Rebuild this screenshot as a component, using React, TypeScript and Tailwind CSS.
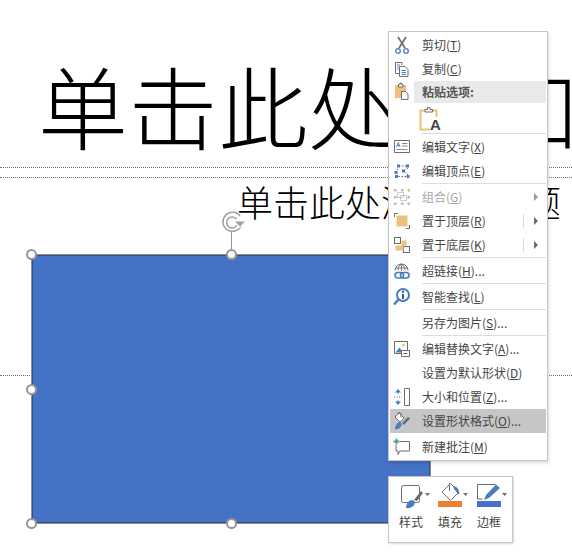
import type { ReactNode } from 'react';

const font = "font-['Microsoft_YaHei','Noto_Sans_CJK_SC','Liberation_Sans',sans-serif]";

const Blue = '#4a7ebb';
const Gold = '#ecc17e';
const Grey = '#6d6d6d';

function Ico({ children }: { children: ReactNode }) {
  return (
    <svg width="20" height="20" viewBox="0 0 20 20" fill="none">
      {children}
    </svg>
  );
}

const icons: Record<string, ReactNode> = {
  cut: (
    <Ico>
      <path d="M6 2l7 11M14 2L7 13" stroke={Grey} strokeWidth="1.700" />
      <circle cx="6" cy="16" r="2.300" stroke={Blue} strokeWidth="1.300" />
      <circle cx="14" cy="16" r="2.300" stroke={Blue} strokeWidth="1.300" />
    </Ico>
  ),
  copy: (
    <Ico>
      <path d="M10 6V3.500H3.500v11H7" stroke={Grey} />
      <path d="M7.500 7.500h5.500l3 3v7H7.500z" fill="#fff" stroke={Grey} />
      <path d="M9.500 11.500h4.500M9.500 13.500h4.500M9.500 15.500h4.500M5 6h3M5 8h1.500M5 10h1.500" stroke={Blue} />
    </Ico>
  ),
  paste: (
    <Ico>
      <path d="M3 4h11v13H3z" fill={Gold} />
      <path d="M6.500 6V3.500H8V2h1.500v1.500H11V6z" fill="#fff" stroke={Grey} />
      <path d="M9.500 10.500h4l2.500 2.500v5.500H9.500z" fill="#fff" stroke={Grey} />
    </Ico>
  ),
  text: (
    <Ico>
      <path d="M2.500 3.500h15v12h-15z" fill="#fff" stroke={Grey} />
      <path d="M4.500 10l1.800-4.500L8 10M5.200 8.500h2.200" stroke={Blue} />
      <path d="M10 6.500h5.500M10 9h5.500M4.500 12.500h11" stroke={Grey} strokeWidth="0.800" />
    </Ico>
  ),
  points: (
    <Ico>
      <path d="M7 5h7M16 7l-4 3 4 4M14 15.500H5M4 12l2-5" stroke={Grey} strokeDasharray="1.500 1.500" />
      {[[5, 3.500], [14, 3.500], [10, 8.500], [14.500, 14], [2.500, 10], [3, 14]].map(([x, y]) => (
        <rect key={`${x}-${y}`} x={x} y={y} width="3" height="3" fill={Blue} />
      ))}
    </Ico>
  ),
  group: (
    <Ico>
      <path d="M5.500 5.500h6v5h-6zM8.500 8.500h6v5h-6z" stroke="#c9c9c9" />
      {[[2, 2], [9, 2], [15.500, 2], [2, 9], [15.500, 9], [2, 15.500], [9, 15.500], [15.500, 15.500]].map(([x, y]) => (
        <rect key={`${x}-${y}`} x={x} y={y} width="2.500" height="2.500" fill="#bdbdbd" />
      ))}
    </Ico>
  ),
  front: (
    <Ico>
      <path d="M2.500 6V2.500H6M17.500 14v3.500H14" stroke={Grey} />
      <rect x="4.500" y="4.500" width="11" height="11" fill={Gold} />
    </Ico>
  ),
  back: (
    <Ico>
      <rect x="2.500" y="2.500" width="6" height="6" fill="#fff" stroke={Grey} />
      <rect x="11.500" y="11.500" width="6" height="6" fill="#fff" stroke={Grey} />
      <path d="M3.500 10.500h6v-5h5v5h-3v5h-8z" fill={Gold} />
    </Ico>
  ),
  link: (
    <Ico>
      <path d="M3 9.500a6.500 6.500 0 0 1 13 0" stroke={Grey} />
      <path d="M9.500 3v7M3.500 7h12M6 9.500c0-3 1.500-5.500 3.500-6.500 2 1 3.500 3.500 3.500 6.500" stroke={Grey} strokeWidth="0.900" />
      <rect x="3" y="11.500" width="8.500" height="5.500" rx="2.700" stroke={Blue} strokeWidth="1.700" />
      <rect x="8.500" y="11.500" width="8.500" height="5.500" rx="2.700" stroke={Blue} strokeWidth="1.700" />
    </Ico>
  ),
  search: (
    <Ico>
      <circle cx="11" cy="8" r="6" fill="#fff" stroke={Blue} strokeWidth="2" />
      <path d="M6.500 12.500L2 17.500" stroke={Blue} strokeWidth="2.600" />
      <path d="M11 7v5" stroke="#2f5f95" strokeWidth="2" />
      <circle cx="11" cy="4.800" r="1.200" fill="#2f5f95" />
    </Ico>
  ),
  alt: (
    <Ico>
      <path d="M2.500 2.500h13v12h-13z" fill="#fff" stroke={Grey} />
      <circle cx="11.500" cy="6" r="1.500" fill={Gold} />
      <path d="M3.500 13.500l4-5 3.500 5z" fill={Blue} />
      <path d="M9.500 11.500h8v6h-8z" fill="#fff" stroke={Grey} />
      <path d="M11.500 14.500h4" stroke={Grey} />
    </Ico>
  ),
  size: (
    <Ico>
      <path d="M12.500 1.500h5v17h-5z" stroke={Grey} />
      <path d="M6 2L3 5.500h6zM6 18l-3-3.500h6z" fill={Blue} />
      <path d="M6 5v2M6 13v2" stroke={Blue} />
      <path d="M2 10h8" stroke={Grey} strokeDasharray="1 1.500" />
    </Ico>
  ),
  format: (
    <Ico>
      <path d="M3 6l4-4 5 5-4 4z" fill="#fff" stroke={Grey} />
      <path d="M6 2.500c1-2 3-1 3 1v3" stroke={Grey} />
      <path d="M3 18c0-4 3-7 5-7l2 2c-1 3-3 6-7 5z" fill={Blue} />
      <path d="M10 12l6-6 2 1.500-6 6.500z" fill="#5d6f86" />
    </Ico>
  ),
  comment: (
    <Ico>
      <path d="M8 4.500h9.500v9.500H8l-2 3.500v-3.500H4v-6" stroke={Grey} />
      <path d="M4.500 1.500v6M1.500 4.500h6" stroke="#4f9d84" strokeWidth="1.800" />
    </Ico>
  ),
};

type Row = {
  label: string;
  hot?: string;
  tail?: string;
  icon?: string;
  sep?: boolean;
  disabled?: boolean;
  sub?: boolean;
  split?: boolean;
  active?: boolean;
};

const top: Row[] = [
  { label: '剪切(', hot: 'T', tail: ')', icon: 'cut' },
  { label: '复制(', hot: 'C', tail: ')', icon: 'copy' },
];

const rest: Row[] = [
  { label: '编辑文字(', hot: 'X', tail: ')', icon: 'text' },
  { label: '编辑顶点(', hot: 'E', tail: ')', icon: 'points', sep: true },
  { label: '组合(', hot: 'G', tail: ')', icon: 'group', disabled: true, sub: true },
  { label: '置于顶层(', hot: 'R', tail: ')', icon: 'front', sub: true, split: true },
  { label: '置于底层(', hot: 'K', tail: ')', icon: 'back', sub: true, split: true, sep: true },
  { label: '超链接(', hot: 'H', tail: ')...', icon: 'link', sep: true },
  { label: '智能查找(', hot: 'L', tail: ')', icon: 'search', sep: true },
  { label: '另存为图片(', hot: 'S', tail: ')...', sep: true },
  { label: '编辑替换文字(', hot: 'A', tail: ')...', icon: 'alt' },
  { label: '设置为默认形状(', hot: 'D', tail: ')' },
  { label: '大小和位置(', hot: 'Z', tail: ')...', icon: 'size' },
  { label: '设置形状格式(', hot: 'O', tail: ')...', icon: 'format', active: true },
];

function MenuRow({ row }: { row: Row }) {
  return (
    <>
      <div className={`flex h-6 items-center ${row.active ? 'bg-[#c6c6c6]' : ''}`}>
        <div className="flex w-8 shrink-0 pl-[2px]">{row.icon && icons[row.icon]}</div>
        <span className={`text-xs ${row.disabled ? 'text-[#a6a6a6]' : 'text-[#444444]'}`}>
          {row.label}
          <span className="underline">{row.hot}</span>
          {row.tail}
        </span>
        {row.sub && (
          <div className="ml-auto flex items-center">
            {row.split && <div className="h-[14px] w-px bg-[#d8d8d8]" />}
            <div className={`ml-[10px] mr-[8px] h-0 w-0 border-y-[4px] border-l-[4px] border-y-transparent ${row.disabled ? 'border-l-[#9a9a9a]' : 'border-l-[#6a6a6a]'}`} />
          </div>
        )}
      </div>
      {row.sep && <div className="mb-[1px] ml-8 h-px bg-[#dcdcdc]" />}
    </>
  );
}

function ContextMenu() {
  return (
    <div className={`absolute left-[388px] top-[31px] w-[160px] border border-[#c6c6c6] bg-white p-[1px] shadow-[1px_2px_3px_rgba(0,0,0,0.15)] ${font}`}>
      {top.map((r) => (
        <MenuRow key={r.label} row={r} />
      ))}
      <div className="flex h-[22px]">
        <div className="flex w-6 shrink-0 pl-[2px]">{icons.paste}</div>
        <div className="flex flex-1 items-center bg-[#e9e9e9] pl-[8px] text-xs font-bold text-[#555555]">粘贴选项:</div>
      </div>
      <div className="h-[30px] pl-[29px] pt-[4px]">
        <svg width="24" height="24" viewBox="0 0 24 24" fill="none">
          <path d="M1.500 3.500h16v19h-16z" fill="#fff" stroke={Gold} strokeWidth="2" />
          <path d="M6 5V2.500h2.500V.500h2.500v2h2.500V5z" fill="#fff" stroke={Grey} />
          <rect x="11" y="10" width="12" height="14" fill="#fff" />
          <text x="11" y="23" fontSize="15" fontWeight="700" fill="#444444" fontFamily="Liberation Sans">A</text>
        </svg>
      </div>
      <div className="mb-[1px] ml-8 h-px bg-[#dcdcdc]" />
      {rest.map((r) => (
        <MenuRow key={r.label} row={r} />
      ))}
      <div className="mt-[2px]">
        <MenuRow row={{ label: '新建批注(', hot: 'M', tail: ')', icon: 'comment' }} />
      </div>
    </div>
  );
}

function MiniBar() {
  return (
    <div className={`absolute left-[388px] top-[476px] flex h-[67px] w-[125px] gap-[5px] border border-[#c6c6c6] bg-white pl-[5px] pt-[6px] shadow-[1px_1px_2px_rgba(0,0,0,0.15)] ${font}`}>
      <div className="flex w-[34px] flex-col items-center">
        <svg className="overflow-visible" width="34" height="28" viewBox="0 0 34 28" fill="none">
          <rect x="7.500" y="2.500" width="18" height="17" rx="2" stroke={Grey} />
          <path d="M20 17l7-9 2 2-6 8z" fill="#6b6b6b" />
          <path d="M12 25c0-5 3-8 7-8l2 2c0 3-3 7-9 6z" fill={Blue} />
          <path d="M31 10h5l-2.500 3z" fill={Grey} />
        </svg>
        <span className="mt-[3px] text-xs text-[#444444]">样式</span>
      </div>
      <div className="flex w-[34px] flex-col items-center">
        <svg className="overflow-visible" width="34" height="28" viewBox="0 0 34 28" fill="none">
          <path d="M9 9l8.500-8.500L26 9l-8.500 8.500z" fill="#fff" stroke={Grey} />
          <path d="M16.500 0v8" stroke={Grey} />
          <path d="M20 3c4 0 7 4 6 9l-5-6z" fill={Blue} />
          <rect x="5" y="18" width="24" height="6" fill="#ed7d31" />
          <path d="M30 10h5l-2.500 3z" fill={Grey} />
        </svg>
        <span className="mt-[3px] text-xs text-[#444444]">填充</span>
      </div>
      <div className="flex w-[34px] flex-col items-center">
        <svg className="overflow-visible" width="34" height="28" viewBox="0 0 34 28" fill="none">
          <path d="M5.500 16V1.500h18M5.500 16h5" stroke={Grey} />
          <path d="M12 17l2-5L24 1.500 28 5 17 15z" fill={Blue} />
          <rect x="5" y="18" width="24" height="6" fill="#4472c4" />
          <path d="M30 10h5l-2.500 3z" fill={Grey} />
        </svg>
        <span className="mt-[3px] text-xs text-[#444444]">边框</span>
      </div>
    </div>
  );
}

function Handle({ pos }: { pos: string }) {
  return <div className={`absolute h-[11px] w-[11px] rounded-full border-2 border-[#979797] bg-white ${pos}`} />;
}

export default function App() {
  return (
    <div className={`relative h-[559px] w-[572px] overflow-hidden bg-white ${font}`}>
      {/* placeholders */}
      <div className="absolute left-0 top-[167px] w-full border-t border-dotted border-[#6f6f6f]" />
      <div className="absolute left-0 top-[177px] w-full border-t border-dotted border-[#6f6f6f]" />
      <div className="absolute left-0 top-[375px] w-full border-t border-dotted border-[#6f6f6f]" />

      <div className="absolute left-[38px] top-[39px] whitespace-nowrap text-[90px] font-light leading-[130px] text-black">单击此处添加标题</div>
      <div className="absolute left-[237px] top-[178px] whitespace-nowrap text-[36px] font-light leading-[46px] text-black">单击此处添加副标题</div>

      {/* selected shape */}
      <div className="absolute left-[32px] top-[255px] h-[268px] w-[398px] border border-[#2f528f] bg-[#4472c4] outline outline-1 outline-[#8f8f8f]" />
      <div className="absolute left-[231px] top-[232px] h-[22px] w-px bg-[#979797]" />
      <svg className="absolute left-[221px] top-[211px]" width="26" height="24" viewBox="0 0 26 24" fill="none">
        <path d="M19 5A9.500 9.500 0 1 0 20 15" stroke="#a0a0a0" strokeWidth="1.500" />
        <path d="M15.500 8A5.500 5.500 0 1 0 16 14" stroke="#a0a0a0" strokeWidth="1.500" />
        <path d="M12 10h13l-6.500 7z" fill="#fff" />
        <path d="M14 10.500h10l-5 5z" fill="#a0a0a0" />
      </svg>
      <Handle pos="left-[26px] top-[249px]" />
      <Handle pos="left-[226px] top-[249px]" />
      <Handle pos="left-[26px] top-[384px]" />
      <Handle pos="left-[26px] top-[518px]" />
      <Handle pos="left-[226px] top-[518px]" />

      <ContextMenu />
      <MiniBar />
    </div>
  );
}
